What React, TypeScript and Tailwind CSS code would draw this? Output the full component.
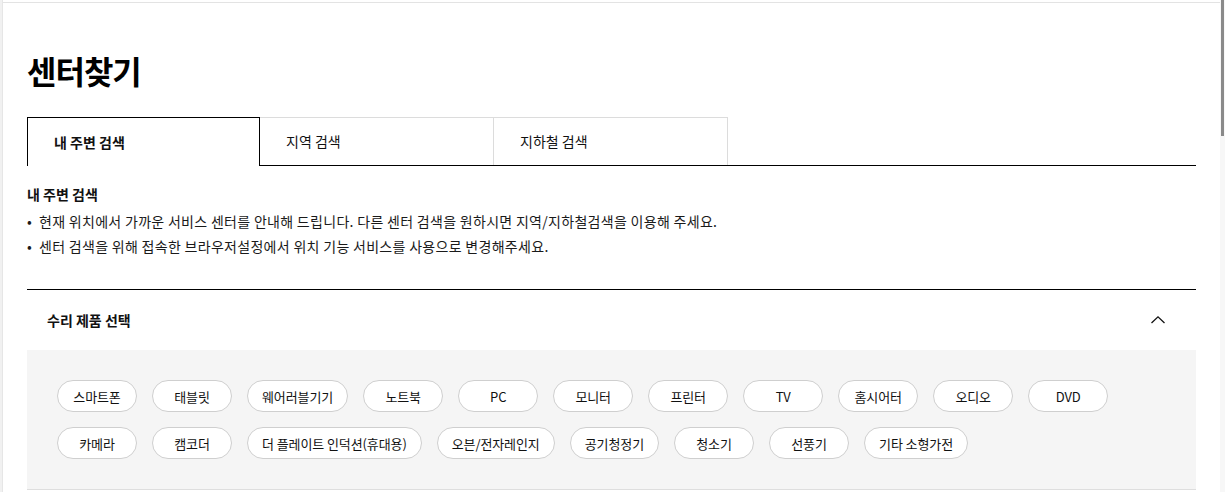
import React from 'react';

const font = { fontFamily: '"Noto Sans CJK KR", "Noto Sans", sans-serif' };

const tabs = ['내 주변 검색', '지역 검색', '지하철 검색'];

const row1 = ['스마트폰', '태블릿', '웨어러블기기', '노트북', 'PC', '모니터', '프린터', 'TV', '홈시어터', '오디오', 'DVD'];
const row2 = ['카메라', '캠코더', '더 플레이트 인덕션(휴대용)', '오븐/전자레인지', '공기청정기', '청소기', '선풍기', '기타 소형가전'];

const Chip = ({ label }: { label: string }) => (
  <button className="h-[32px] min-w-[80px] rounded-full border border-[#cfcfcf] bg-white px-[14px] text-[13px] leading-none tracking-[-0.1px] text-[#111]">
    {label}
  </button>
);

export default function App() {
  return (
    <div className="flex h-[492px] w-full overflow-hidden bg-white text-[#111]" style={font}>
      <div className="w-[3px] shrink-0 border-r border-[#e6e6e6] bg-[#f1f1f1]" />
      <div className="flex-1 pt-[2px]">
        <div className="h-full border-t border-[#e3e3e3] px-6 pt-[47px]">
          <h1 className="text-[32px] font-bold leading-[40px] tracking-[-1px] text-black">센터찾기</h1>

          <div className="mt-[27px] flex border-b border-black">
            {tabs.map((t, i) =>
              i === 0 ? (
                <div
                  key={t}
                  className="-mb-px flex h-[49px] w-[233px] items-center border border-b-0 border-black bg-white pl-[26px] text-[14px] font-bold"
                >
                  {t}
                </div>
              ) : (
                <div
                  key={t}
                  className="flex h-[48px] w-[234px] items-center border-t border-r border-[#dcdcdc] pl-[26px] text-[14px]"
                >
                  {t}
                </div>
              )
            )}
          </div>

          <div className="mt-[18px] text-[14px] font-bold leading-[20px]">내 주변 검색</div>
          <ul className="mt-[5px] text-[14px] leading-[25px] tracking-[0.3px] text-[#1a1a1a]">
            <li className="flex">
              <span className="w-[12px] shrink-0">•</span>
              현재 위치에서 가까운 서비스 센터를 안내해 드립니다. 다른 센터 검색을 원하시면 지역/지하철검색을 이용해 주세요.
            </li>
            <li className="flex">
              <span className="w-[12px] shrink-0">•</span>
              센터 검색을 위해 접속한 브라우저설정에서 위치 기능 서비스를 사용으로 변경해주세요.
            </li>
          </ul>

          <div className="mt-[30px] border-t border-black">
            <div className="flex h-[60px] items-center justify-between pl-[20px] pr-[30px]">
              <span className="text-[14px] font-bold">수리 제품 선택</span>
              <svg width="16" height="10" viewBox="0 0 16 10" fill="none">
                <path d="M1.5 8L8 1.8L14.5 8" stroke="#111" strokeWidth="1.3" />
              </svg>
            </div>
            <div className="flex flex-col gap-[15px] border-b border-[#dedede] bg-[#f5f5f5] px-[30px] pt-[30px] pb-[30px]">
              <div className="flex gap-[15px]">
                {row1.map((c) => (
                  <Chip key={c} label={c} />
                ))}
              </div>
              <div className="flex gap-[15px]">
                {row2.map((c) => (
                  <Chip key={c} label={c} />
                ))}
              </div>
            </div>
          </div>
        </div>
      </div>
      <div className="relative w-[5px] shrink-0 bg-[#f7f7f7]">
        <div className="ml-[1px] h-[136px] w-[3px] bg-[#8a8a8a]" />
      </div>
    </div>
  );
}
